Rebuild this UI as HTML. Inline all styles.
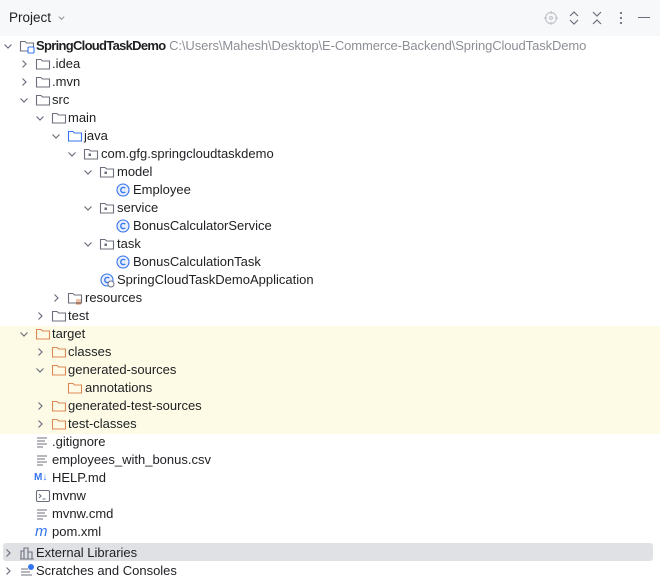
<!DOCTYPE html>
<html><head><meta charset="utf-8"><style>
body{margin:0;width:660px;height:577px;background:#fff;font-family:"Liberation Sans",sans-serif;font-size:13px;color:#1e1f22;position:relative;overflow:hidden}
.hd{position:absolute;left:0;top:0;width:660px;height:36px;background:#f7f8fa}
.r{position:absolute;height:18px;line-height:18px;white-space:nowrap;margin-top:1px}
.a{position:absolute;width:10px;height:10px}
.i{position:absolute;width:16px;height:16px}
.g{color:#8c8f96;letter-spacing:-0.1px}
</style></head><body>
<div class="hd"></div>
<div class="r" style="left:9px;top:8px;font-size:13.5px">Project <svg width="9" height="9" style="margin-left:2px" viewBox="0 0 10 10"><path d="M2 4l3 3 3-3" fill="none" stroke="#999" stroke-width="1.2"/></svg></div>
<svg style="position:absolute;left:543px;top:10px" width="16" height="16" viewBox="0 0 16 16" fill="none" stroke="#c4c6cc" stroke-width="1.2"><circle cx="8" cy="8" r="5.5"/><circle cx="8" cy="8" r="1.5"/><path d="M8 1v3M8 12v3M1 8h3M12 8h3"/></svg>
<svg style="position:absolute;left:567px;top:10px" width="14" height="16" viewBox="0 0 14 16" fill="none" stroke="#6c707e" stroke-width="1.2"><path d="M3 6l4-4 4 4M3 10l4 4 4-4"/></svg>
<svg style="position:absolute;left:590px;top:10px" width="14" height="16" viewBox="0 0 14 16" fill="none" stroke="#6c707e" stroke-width="1.2"><path d="M3 2l4 4 4-4M3 14l4-4 4 4"/></svg>
<svg style="position:absolute;left:614px;top:10px" width="14" height="16" viewBox="0 0 14 16" fill="#6c707e"><circle cx="7" cy="3" r="1.1"/><circle cx="7" cy="8" r="1.1"/><circle cx="7" cy="13" r="1.1"/></svg>
<div style="position:absolute;left:638px;top:17px;width:12px;height:1.3px;background:#6c707e"></div>

<div style="position:absolute;left:0;top:326px;width:660px;height:108px;background:#fdfbe6"></div>
<div style="position:absolute;left:3px;top:543px;width:650px;height:18px;background:#dfe1e5;border-radius:3px"></div>

<svg width="0" height="0" style="position:absolute"><defs>
<path id="dn" d="M1.5 3.5l3.5 3.5 3.5-3.5" fill="none" stroke="#6c707e" stroke-width="1.2"/>
<path id="rt" d="M3.5 1.5l3.5 3.5-3.5 3.5" fill="none" stroke="#6c707e" stroke-width="1.2"/>
<g id="fg"><path d="M1.5 3.5h4.5l1.5 1.5h7v8h-13z" fill="none" stroke="#6c707e" stroke-width="1.1"/></g>
<g id="fo"><path d="M1.5 3.5h4.5l1.5 1.5h7v8h-13z" fill="none" stroke="#e08855" stroke-width="1.1"/></g>
<g id="fb"><path d="M1.5 3.5h4.5l1.5 1.5h7v8h-13z" fill="none" stroke="#3574f0" stroke-width="1.1"/></g>
<g id="pk"><path d="M1.5 3.5h4.5l1.5 1.5h7v8h-13z" fill="none" stroke="#6c707e" stroke-width="1.1"/><rect x="5.5" y="7.5" width="2.5" height="2.5" fill="#6c707e"/></g>
<g id="cl"><circle cx="8" cy="8" r="6" fill="#e7effd" stroke="#3574f0" stroke-width="1.1"/><path d="M10.2 6.2a2.6 2.6 0 1 0 0 3.6" fill="none" stroke="#3574f0" stroke-width="1.3"/></g>
<g id="tx"><path d="M3 4h10M3 7h8M3 10h10M3 13h6" stroke="#6c707e" stroke-width="1.1"/></g>
</defs></svg>

<svg class="a" style="left:3px;top:41px"><use href="#dn"/></svg><svg class="i" style="left:19px;top:38px"><path d="M1.5 3.5h4.5l1.5 1.5h7v8h-13z" fill="none" stroke="#6c707e" stroke-width="1.1"/><rect x="9" y="9" width="6" height="6" rx="1" fill="#fff" stroke="#3574f0" stroke-width="1.1"/></svg>
<div class="r" style="left:36px;top:36px"><b style="letter-spacing:-0.7px">SpringCloudTaskDemo</b> <span class="g">C:\Users\Mahesh\Desktop\E-Commerce-Backend\SpringCloudTaskDemo</span></div>

<svg class="a" style="left:19px;top:59px"><use href="#rt"/></svg><svg class="i" style="left:35px;top:56px"><use href="#fg"/></svg><div class="r" style="left:52px;top:54px">.idea</div>
<svg class="a" style="left:19px;top:77px"><use href="#rt"/></svg><svg class="i" style="left:35px;top:74px"><use href="#fg"/></svg><div class="r" style="left:52px;top:72px">.mvn</div>
<svg class="a" style="left:19px;top:95px"><use href="#dn"/></svg><svg class="i" style="left:35px;top:92px"><use href="#fg"/></svg><div class="r" style="left:52px;top:90px">src</div>
<svg class="a" style="left:35px;top:113px"><use href="#dn"/></svg><svg class="i" style="left:51px;top:110px"><use href="#fg"/></svg><div class="r" style="left:68px;top:108px">main</div>
<svg class="a" style="left:51px;top:131px"><use href="#dn"/></svg><svg class="i" style="left:67px;top:128px"><use href="#fb"/></svg><div class="r" style="left:84px;top:126px">java</div>
<svg class="a" style="left:67px;top:149px"><use href="#dn"/></svg><svg class="i" style="left:83px;top:146px"><use href="#pk"/></svg><div class="r" style="left:101px;top:144px">com.gfg.springcloudtaskdemo</div>
<svg class="a" style="left:83px;top:167px"><use href="#dn"/></svg><svg class="i" style="left:99px;top:164px"><use href="#pk"/></svg><div class="r" style="left:117px;top:162px">model</div>
<svg class="i" style="left:115px;top:182px"><use href="#cl"/></svg><div class="r" style="left:133px;top:180px">Employee</div>
<svg class="a" style="left:83px;top:203px"><use href="#dn"/></svg><svg class="i" style="left:99px;top:200px"><use href="#pk"/></svg><div class="r" style="left:117px;top:198px">service</div>
<svg class="i" style="left:115px;top:218px"><use href="#cl"/></svg><div class="r" style="left:133px;top:216px">BonusCalculatorService</div>
<svg class="a" style="left:83px;top:239px"><use href="#dn"/></svg><svg class="i" style="left:99px;top:236px"><use href="#pk"/></svg><div class="r" style="left:117px;top:234px">task</div>
<svg class="i" style="left:115px;top:254px"><use href="#cl"/></svg><div class="r" style="left:133px;top:252px">BonusCalculationTask</div>
<svg class="i" style="left:99px;top:272px"><use href="#cl"/><circle cx="12" cy="12" r="3" fill="#fff" stroke="#6c707e" stroke-width="1"/></svg><div class="r" style="left:117px;top:270px">SpringCloudTaskDemoApplication</div>
<svg class="a" style="left:51px;top:293px"><use href="#rt"/></svg><svg class="i" style="left:67px;top:290px"><use href="#fg"/><path d="M9 10h5M9 12h5M9 14h5" stroke="#e08855" stroke-width="1.1"/></svg><div class="r" style="left:85px;top:288px">resources</div>
<svg class="a" style="left:35px;top:311px"><use href="#rt"/></svg><svg class="i" style="left:51px;top:308px"><use href="#fg"/></svg><div class="r" style="left:68px;top:306px">test</div>
<svg class="a" style="left:19px;top:329px"><use href="#dn"/></svg><svg class="i" style="left:35px;top:326px"><use href="#fo"/></svg><div class="r" style="left:52px;top:324px">target</div>
<svg class="a" style="left:35px;top:347px"><use href="#rt"/></svg><svg class="i" style="left:51px;top:344px"><use href="#fo"/></svg><div class="r" style="left:68px;top:342px">classes</div>
<svg class="a" style="left:35px;top:365px"><use href="#dn"/></svg><svg class="i" style="left:51px;top:362px"><use href="#fo"/></svg><div class="r" style="left:68px;top:360px">generated-sources</div>
<svg class="i" style="left:67px;top:380px"><use href="#fo"/></svg><div class="r" style="left:85px;top:378px">annotations</div>
<svg class="a" style="left:35px;top:401px"><use href="#rt"/></svg><svg class="i" style="left:51px;top:398px"><use href="#fo"/></svg><div class="r" style="left:68px;top:396px">generated-test-sources</div>
<svg class="a" style="left:35px;top:419px"><use href="#rt"/></svg><svg class="i" style="left:51px;top:416px"><use href="#fo"/></svg><div class="r" style="left:68px;top:414px">test-classes</div>
<svg class="i" style="left:34px;top:434px"><use href="#tx"/></svg><div class="r" style="left:52px;top:432px">.gitignore</div>
<svg class="i" style="left:34px;top:452px"><use href="#tx"/></svg><div class="r" style="left:52px;top:450px">employees_with_bonus.csv</div>
<div class="r" style="left:34px;top:468px;font-size:10px;font-weight:bold;color:#3574f0">M↓</div><div class="r" style="left:52px;top:468px">HELP.md</div>
<svg class="i" style="left:35px;top:488px"><rect x="1.5" y="2.5" width="13" height="11" rx="1.5" fill="none" stroke="#6c707e" stroke-width="1.1"/><path d="M4 6l2 2-2 2M7.5 11h3" fill="none" stroke="#6c707e" stroke-width="1.1"/></svg><div class="r" style="left:52px;top:486px">mvnw</div>
<svg class="i" style="left:34px;top:506px"><use href="#tx"/></svg><div class="r" style="left:52px;top:504px">mvnw.cmd</div>
<div class="r" style="left:35px;top:522px;font-style:italic;color:#3574f0;font-size:15px">m</div><div class="r" style="left:52px;top:522px">pom.xml</div>
<svg class="a" style="left:3px;top:548px"><use href="#rt"/></svg><svg class="i" style="left:19px;top:545px"><path d="M2 14V6h3v8M5 14V3h4v11M9 14V7h4v7M1 14h14" fill="none" stroke="#6c707e" stroke-width="1.1"/></svg><div class="r" style="left:36px;top:543px">External Libraries</div>
<svg class="a" style="left:3px;top:566px"><use href="#rt"/></svg><svg class="i" style="left:19px;top:563px"><path d="M2 6h7M2 9h9M2 12h11" stroke="#6c707e" stroke-width="1.1"/><circle cx="12" cy="4" r="3" fill="#3574f0"/></svg><div class="r" style="left:36px;top:561px">Scratches and Consoles</div>
</body></html>
